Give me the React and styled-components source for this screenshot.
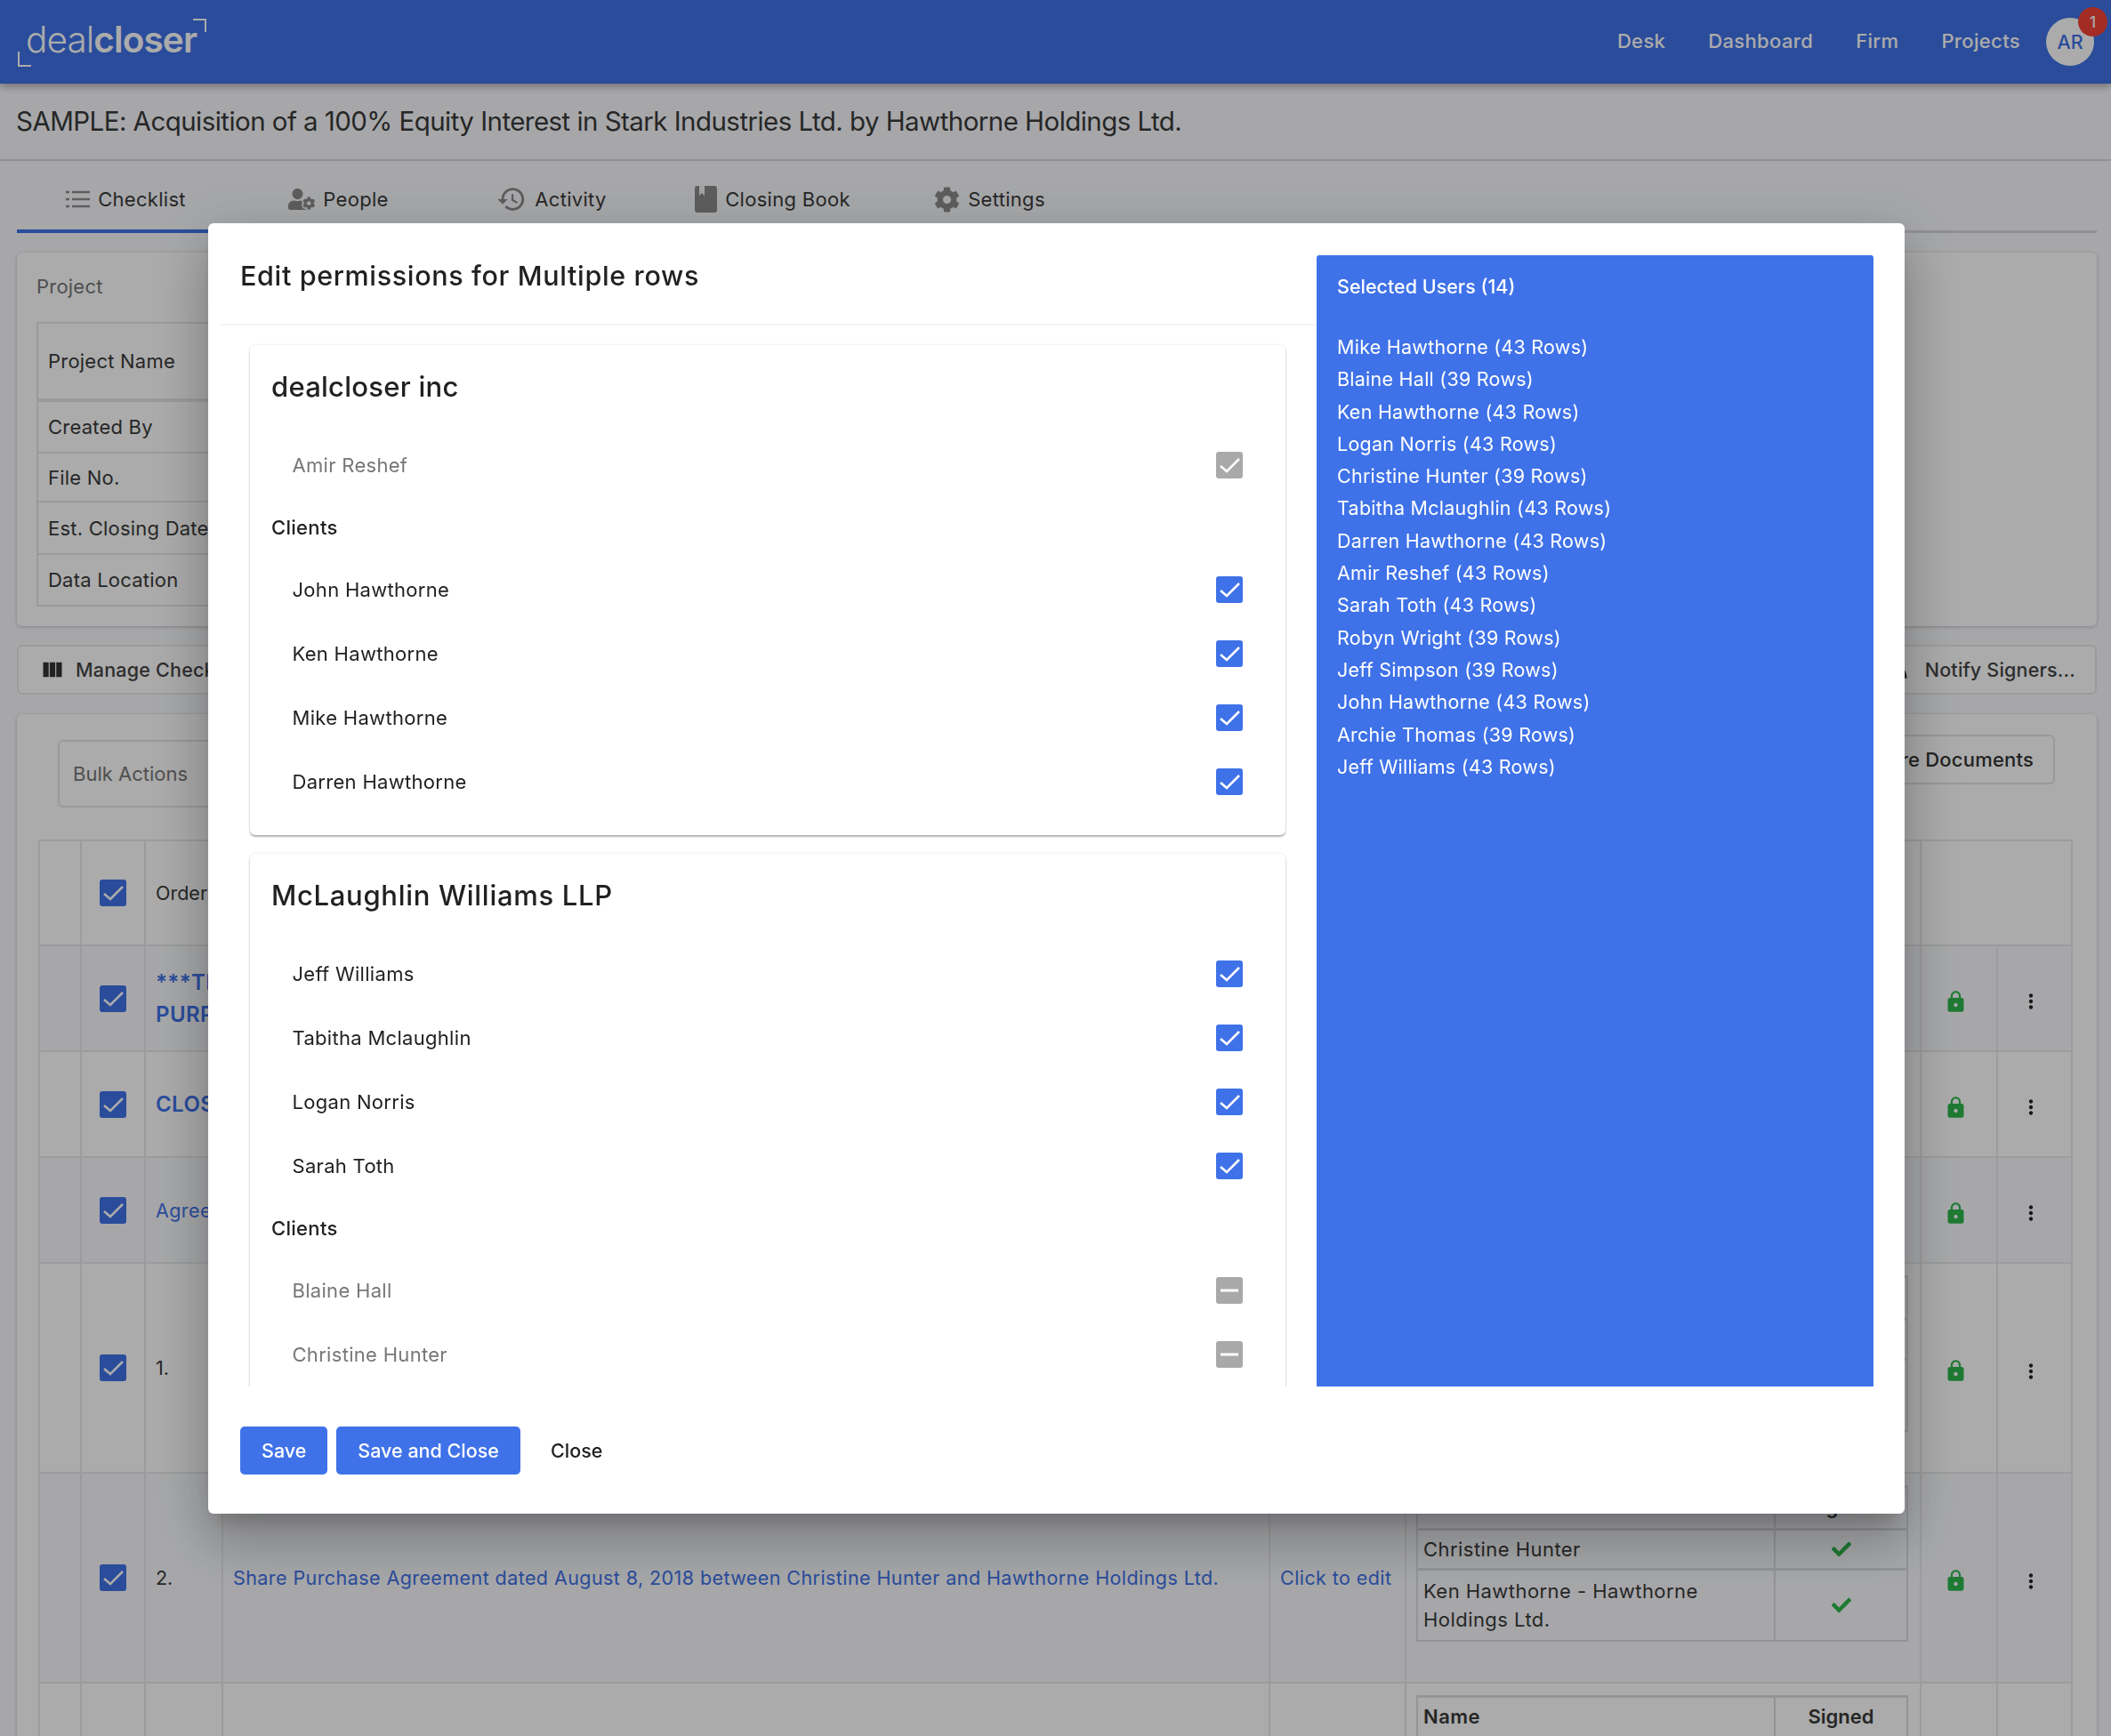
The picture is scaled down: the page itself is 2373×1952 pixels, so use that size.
import React from 'react';
import styled, { createGlobalStyle } from 'styled-components';
import { FaUserCog, FaCog, FaCheck, FaRss } from 'react-icons/fa';
import { MdLock, MdMoreVert, MdViewColumn, MdHistory } from 'react-icons/md';

const Global = createGlobalStyle`
  * { box-sizing: border-box; }
  html, body { margin: 0; height: 1952px; overflow: hidden; }
  body { background: #f9fafe; font-family: Inter, "Open Sans", sans-serif; color: #3a3a3a; }
`;

const Page = styled.div`
  width: 2373px; height: 1952px; overflow: hidden; display: flex; flex-direction: column;
`;
const Header = styled.header`
  flex: none; height: 94px; background: #3f72e8; display: flex; align-items: center;
  padding: 0 19px 0 20px; box-shadow: 0 3px 9px rgba(0,0,0,.35); position: relative; color: #fff;
`;
const Logo = styled.div`
  width: 212px; height: 46px; margin-top: -4px; position: relative; font-size: 40.5px; line-height: 46px; padding-left: 9px; letter-spacing: -.9px; font-weight: 300;
  b { font-weight: 600; }
  &::before { content: ''; position: absolute; left: 0; bottom: -7px; width: 13px; height: 15px; border-left: 2px solid #fff; border-bottom: 2px solid #fff; }
  &::after { content: ''; position: absolute; right: 0; top: -1px; width: 13px; height: 13px; border-right: 2px solid #fff; border-top: 2px solid #fff; }
`;
const Nav = styled.nav`
  margin-left: auto; display: flex; align-items: center; gap: 48px; font-size: 22px; font-weight: 500; letter-spacing: .35px; padding-bottom: 3px;
`;
const Avatar = styled.div`
  width: 54px; height: 54px; border-radius: 50%; background: #fff; color: #3f72e8; margin-left: -19px; margin-top: 3px; letter-spacing: 0;
  display: flex; align-items: center; justify-content: center; font-size: 21.5px; font-weight: 500; position: relative;
`;
const Badge = styled.span`
  position: absolute; top: -12px; right: -15px; width: 33px; height: 33px; border-radius: 50%; background: #f44336; color: #fff;
  font-size: 17px; font-weight: 500; display: flex; align-items: center; justify-content: center;
`;
const TitleBar = styled.div`
  flex: none; height: 87px; padding: 0 18px 1px; border-bottom: 2px solid #cfd8e3; display: flex; align-items: center; font-size: 29.5px; letter-spacing: -.55px;
`;
const Tabs = styled.div`
  flex: none; margin: 0 16px 0 19px; height: 81px; border-bottom: 3px solid #d8d8d8; display: flex;
`;
const Tab = styled.div`
  width: ${p => p.$w}px; height: 81px; display: flex; align-items: center; justify-content: center; gap: 9px; font-size: 22px; letter-spacing: .3px; padding-top: 9px;
  border-bottom: 4px solid ${p => (p.$active ? '#3f72e8' : 'transparent')};
  svg { color: #8b8b8b; flex: none; }
`;
const Card = styled.section`
  background: #fff; border-radius: 6px; margin: 0 16px 0 19px; box-shadow: 0 1px 4px rgba(0,0,0,.22);
`;
const ProjectCard = styled(Card)`
  flex: none; margin-top: 22px; height: 420px; padding: 0 22px; font-size: 22px; letter-spacing: .22px;
`;
const ProjectLabel = styled.div`
  height: 78px; display: flex; align-items: center; color: #777; padding-bottom: 2px;
`;
const InfoTable = styled.div`
  border: 2px solid #e6e7e8; border-right: none; width: 1800px;
`;
const InfoRow = styled.div`
  height: ${p => p.$h}px; display: flex; align-items: center; padding-left: 11px;
  border-bottom: ${p => p.$thick ? 4 : 2}px solid #e6e7e8;
  &:last-child { border-bottom: none; }
`;
const ToolBar = styled.div`
  flex: none; height: 56px; margin: 21px 16px 0 19px; border: 2px solid #e8e8e8; background: #fff; border-radius: 6px; display: flex; align-items: center; padding: 0 22px 0 24px;
  font-size: 21.5px; letter-spacing: .2px; font-weight: 500; color: #444; justify-content: space-between;
  span { display: flex; align-items: center; gap: 12px; }
`;
const RssIcon = styled(FaRss)`
  margin-right: 7px;
`;
const MainCard = styled(Card)`
  flex: none; margin-top: 22px; height: 1200px; position: relative; padding: 0 27px 0 24px;
`;
const ActionBar = styled.div`
  height: 141px; padding-top: 23px; display: flex; justify-content: space-between; padding-right: 20px; padding-left: 22px; align-items: flex-start;
`;
const BulkBox = styled.div`
  width: 500px; height: 76px; margin-top: 6px; border: 2px solid #e4e4e4; border-radius: 6px; display: flex; align-items: center; padding-left: 15px; font-size: 22px; color: #777;
`;
const DocButton = styled.div`
  height: 56px; padding: 0 22px; border: 2px solid #e4e4e4; border-radius: 6px; display: flex; align-items: center; font-size: 22px; letter-spacing: .2px; font-weight: 500; color: #333;
`;
const Grid = styled.div`
  border-top: 2px solid #e8e9ea; border-left: 2px solid #e8e9ea;
`;
const Row = styled.div`
  display: grid; grid-template-columns: 47px 72px 87px 1177px 153px 579px 86px 84px;
  height: ${p => p.$h}px; background: ${p => (p.$alt ? '#f9fafe' : '#fff')};
`;
const Cell = styled.div`
  border-right: 2px solid #e8e9ea; border-bottom: 2px solid #e8e9ea; display: flex; align-items: center; justify-content: ${p => p.$center ? 'center' : 'flex-start'};
  padding-left: ${p => p.$pad ?? 0}px; font-size: 21.5px; grid-column: ${p => p.$span ? `span ${p.$span}` : 'auto'}; overflow: hidden; min-width: 0;
`;
const IconCell = styled(Cell)`
  padding: 7px 8px 0 0;
`;
const LinkText = styled.div`
  color: #3f72e8; font-weight: ${p => p.$bold ? 600 : 400}; font-size: ${p => p.$bold ? 24 : 21.5}px; line-height: 36px; white-space: nowrap; letter-spacing: .42px;
`;
const NestedCell = styled(Cell)`
  align-items: flex-start; padding: ${p => p.$top}px 0 0 11px;
`;
const Nested = styled.div`
  width: 553px; border: 2px solid #dcdde0; border-top-width: 3px;
`;
const NestedRow = styled.div`
  display: grid; grid-template-columns: 402px 1fr; min-height: ${p => p.$h}px; padding-bottom: 0;
  border-bottom: 3px solid #dcdde0; &:last-child { border-bottom: none; }
`;
const NestedName = styled.div`
  padding: 0 6px ${p => p.$b ? 4 : 0}px; display: flex; align-items: center; line-height: 32px; font-size: 22px; letter-spacing: .45px; border-right: 2px solid #dcdde0; font-weight: ${p => p.$b ? 600 : 400};
`;
const NestedValue = styled.div`
  display: flex; align-items: center; justify-content: center; padding-bottom: ${p => p.$b ? 4 : 0}px; font-size: 22px; font-weight: ${p => p.$b ? 600 : 400}; color: ${p => p.$ok ? '#2eb64c' : 'inherit'};
`;
const Backdrop = styled.div`
  position: fixed; inset: 0; background: rgba(0,0,0,.33); display: flex; padding: 251px 232px 250px 234px;
`;
const Modal = styled.div`
  flex: 1; background: #fff; border-radius: 6px; display: flex; flex-direction: column; color: #212121;
  box-shadow: 0 16px 22px -10px rgba(0,0,0,.2), 0 36px 57px 5px rgba(0,0,0,.14), 0 14px 69px 12px rgba(0,0,0,.12);
`;
const ModalMain = styled.div`
  height: 1308px; display: flex; padding: 0 35px 0 14px;
`;
const LeftCol = styled.div`
  width: 1232px; flex: none; display: flex; flex-direction: column;
`;
const ModalHead = styled.div`
  height: 115px; flex: none; padding: 4px 0 0 22px; border-bottom: 2px solid #f3f3f3; display: flex; align-items: center; font-size: 30.5px; letter-spacing: .65px; font-weight: 500;
`;
const Scroll = styled.div`
  flex: 1; min-height: 0; overflow: hidden; padding: 22px 35px 0 33px; display: flex; flex-direction: column; gap: 21px;
`;
const Group = styled.div`
  flex: none; border-radius: 6px; padding-bottom: 24px; box-shadow: 0 2px 2px rgba(0,0,0,.28), 0 0 3px rgba(0,0,0,.12);
`;
const GroupTitle = styled.div`
  height: 99px; line-height: 94px; padding-left: 24px; font-size: 31px; letter-spacing: ${p => p.$ls}px; font-weight: 500;
`;
const GroupHeading = styled.div`
  height: 68px; display: flex; align-items: center; padding-left: 24px; font-size: 22px; letter-spacing: .3px; font-weight: 500;
`;
const UserRow = styled.div`
  height: 72px; display: flex; align-items: center; justify-content: space-between; padding: 0 48px 0 47.5px; font-size: 22px; letter-spacing: .3px; color: ${p => p.$muted ? '#777' : '#212121'};
`;
const Box = styled.span`
  width: 30px; height: 30px; border-radius: 3px; flex: none; display: flex; align-items: center; justify-content: center;
  background: ${p => p.$gray ? '#a9a9a9' : '#3f72e8'};
`;
const Panel = styled.aside`
  flex: 1; margin-top: 36px; background: #3f72e8; color: #fff; padding: 0 23px; border-radius: 3px 3px 0 0; font-size: 21.5px; letter-spacing: .25px;
`;
const PanelTitle = styled.div`
  height: 69px; display: flex; align-items: center; font-weight: 500; letter-spacing: 0; padding-top: 1px; margin-bottom: 16px;
`;
const PanelItem = styled.div`
  height: 36.3px; line-height: 36.3px; white-space: nowrap;
`;
const Footer = styled.div`
  padding: 45px 36px 0; display: flex; gap: 10px; align-items: center;
`;
const Button = styled.button`
  height: 54px; padding: 0 ${p => p.$px}px; border: none; border-radius: 5px; font: 500 21.5px Inter, sans-serif; color: ${p => p.$plain ? '#212121' : '#fff'};
  background: ${p => p.$plain ? 'transparent' : '#3f72e8'}; 
`;

function Check({ gray, minus }) {
  return (
    <Box $gray={gray}>
      <svg width="30" height="30" viewBox="0 0 30 30" fill="none" stroke="#fff" strokeWidth="2.6">
        {minus ? <path d="M5 15h20" strokeWidth="3" /> : <path d="M5 16l7 6L26 8" />}
      </svg>
    </Box>
  );
}

const ChecklistIcon = () => (
  <svg width="27" height="20" viewBox="0 0 27 20" fill="none" stroke="currentColor" strokeWidth="2.4">
    <path d="M7 2h20M7 10h20M7 18h20M0 2h4M0 10h4M0 18h4" />
  </svg>
);
const BookIcon = () => (
  <svg width="25" height="30" viewBox="0 0 25 30" fill="currentColor">
    <path d="M3 0h19a3 3 0 0 1 3 3v24a3 3 0 0 1-3 3H3a3 3 0 0 1-3-3V3a3 3 0 0 1 3-3z" />
    <path d="M5 0h6v11l-3-3-3 3z" fill="#f4f5f8" />
  </svg>
);

const LockCell = () => (
  <IconCell $center><MdLock size={27} color="#2eb64c" /></IconCell>
);
const DotsCell = () => (
  <IconCell $center><MdMoreVert size={26} color="#222" /></IconCell>
);

const users = [
  'Mike Hawthorne (43 Rows)', 'Blaine Hall (39 Rows)', 'Ken Hawthorne (43 Rows)', 'Logan Norris (43 Rows)',
  'Christine Hunter (39 Rows)', 'Tabitha Mclaughlin (43 Rows)', 'Darren Hawthorne (43 Rows)', 'Amir Reshef (43 Rows)',
  'Sarah Toth (43 Rows)', 'Robyn Wright (39 Rows)', 'Jeff Simpson (39 Rows)', 'John Hawthorne (43 Rows)',
  'Archie Thomas (39 Rows)', 'Jeff Williams (43 Rows)',
];

function SignTable({ rows }) {
  return (
    <Nested>
      <NestedRow $h={48}>
        <NestedName $b>Name</NestedName>
        <NestedValue $b>Signed</NestedValue>
      </NestedRow>
      {rows.map(r => (
        <NestedRow key={r} $h={r.length > 20 ? 78 : 45}>
          <NestedName>{r}</NestedName>
          <NestedValue $ok><FaCheck size={22} /></NestedValue>
        </NestedRow>
      ))}
    </Nested>
  );
}

function TableRow({ h, alt, order, text, bold, first, children, top }) {
  return (
    <Row $h={h} $alt={alt}>
      <Cell />
      <Cell $center><Check /></Cell>
      {first ? (
        <Cell $span={first} $pad={11}><LinkText $bold={bold}>{text}</LinkText></Cell>
      ) : (
        <>
          <Cell $pad={11}>{order}</Cell>
          <Cell $pad={11}><LinkText>{text}</LinkText></Cell>
          <Cell $pad={11}><LinkText>Click to edit</LinkText></Cell>
          <NestedCell $top={top}>{children}</NestedCell>
        </>
      )}
      <LockCell />
      <DotsCell />
    </Row>
  );
}

export default function App() {
  return (
    <>
      <Global />
      <Page>
        <Header>
          <Logo>deal<b>closer</b></Logo>
          <Nav>
            <span>Desk</span><span>Dashboard</span><span>Firm</span><span>Projects</span>
            <Avatar>AR<Badge>1</Badge></Avatar>
          </Nav>
        </Header>
        <TitleBar>SAMPLE: Acquisition of a 100% Equity Interest in Stark Industries Ltd. by Hawthorne Holdings Ltd.</TitleBar>
        <Tabs>
          <Tab $w={245} $active><ChecklistIcon />Checklist</Tab>
          <Tab $w={233}><FaUserCog size={30} />People</Tab>
          <Tab $w={246}><MdHistory size={34} />Activity</Tab>
          <Tab $w={251}><BookIcon />Closing Book</Tab>
          <Tab $w={237}><FaCog size={29} />Settings</Tab>
        </Tabs>
        <ProjectCard>
          <ProjectLabel>Project</ProjectLabel>
          <InfoTable>
            <InfoRow $h={88} $thick>Project Name</InfoRow>
            <InfoRow $h={58}>Created By</InfoRow>
            <InfoRow $h={55}>File No.</InfoRow>
            <InfoRow $h={59}>Est. Closing Date</InfoRow>
            <InfoRow $h={56}>Data Location</InfoRow>
          </InfoTable>
        </ProjectCard>
        <ToolBar>
          <span><MdViewColumn size={28} color="#333" />Manage Checklist</span>
          <span><RssIcon size={22} color="#333" />Notify Signers...</span>
        </ToolBar>
        <MainCard>
          <ActionBar>
            <BulkBox>Bulk Actions</BulkBox>
            <DocButton>Share Documents</DocButton>
          </ActionBar>
          <Grid>
            <Row $h={118}>
              <Cell />
              <Cell $center><Check /></Cell>
              <Cell $span={4} $pad={11}>Order</Cell>
              <Cell $span={2} />
            </Row>
            <TableRow h={119} alt first={4} bold text={<>***THIS IS A SAMPLE<br />PURPOSES ONLY***</>} />
            <TableRow h={119} first={4} bold text="CLOSING AGENDA" />
            <TableRow h={119} alt first={4} text="Agreements" />
            <TableRow h={236} order="1." top={13} text="Disclosure Letter dated August 8, 2018 from the Purchaser to the Vendor.">
              <SignTable rows={['Blaine Hall', 'Mike Hawthorne - Hawthorne Holdings Ltd.']} />
            </TableRow>
            <TableRow h={236} alt order="2." top={13} text="Share Purchase Agreement dated August 8, 2018 between Christine Hunter and Hawthorne Holdings Ltd.">
              <SignTable rows={['Christine Hunter', 'Ken Hawthorne - Hawthorne Holdings Ltd.']} />
            </TableRow>
            <TableRow h={236} order="" top={13} text="">
              <SignTable rows={['Christine Hunter']} />
            </TableRow>
          </Grid>
        </MainCard>
      </Page>
      <Backdrop>
        <Modal>
          <ModalMain>
            <LeftCol>
              <ModalHead>Edit permissions for Multiple rows</ModalHead>
              <Scroll>
                <Group>
                  <GroupTitle $ls={.25}>dealcloser inc</GroupTitle>
                  <UserRow $muted>Amir Reshef<Check gray /></UserRow>
                  <GroupHeading>Clients</GroupHeading>
                  {['John Hawthorne', 'Ken Hawthorne', 'Mike Hawthorne', 'Darren Hawthorne'].map(n => (
                    <UserRow key={n}>{n}<Check /></UserRow>
                  ))}
                </Group>
                <Group>
                  <GroupTitle $ls={.7}>McLaughlin Williams LLP</GroupTitle>
                  {['Jeff Williams', 'Tabitha Mclaughlin', 'Logan Norris', 'Sarah Toth'].map(n => (
                    <UserRow key={n}>{n}<Check /></UserRow>
                  ))}
                  <GroupHeading>Clients</GroupHeading>
                  {['Blaine Hall', 'Christine Hunter'].map(n => (
                    <UserRow key={n} $muted>{n}<Check gray minus /></UserRow>
                  ))}
                </Group>
              </Scroll>
            </LeftCol>
            <Panel>
              <PanelTitle>Selected Users (14)</PanelTitle>
              {users.map(u => <PanelItem key={u}>{u}</PanelItem>)}
            </Panel>
          </ModalMain>
          <Footer>
            <Button $px={24}>Save</Button>
            <Button $px={24}>Save and Close</Button>
            <Button $plain $px={24}>Close</Button>
          </Footer>
        </Modal>
      </Backdrop>
    </>
  );
}
